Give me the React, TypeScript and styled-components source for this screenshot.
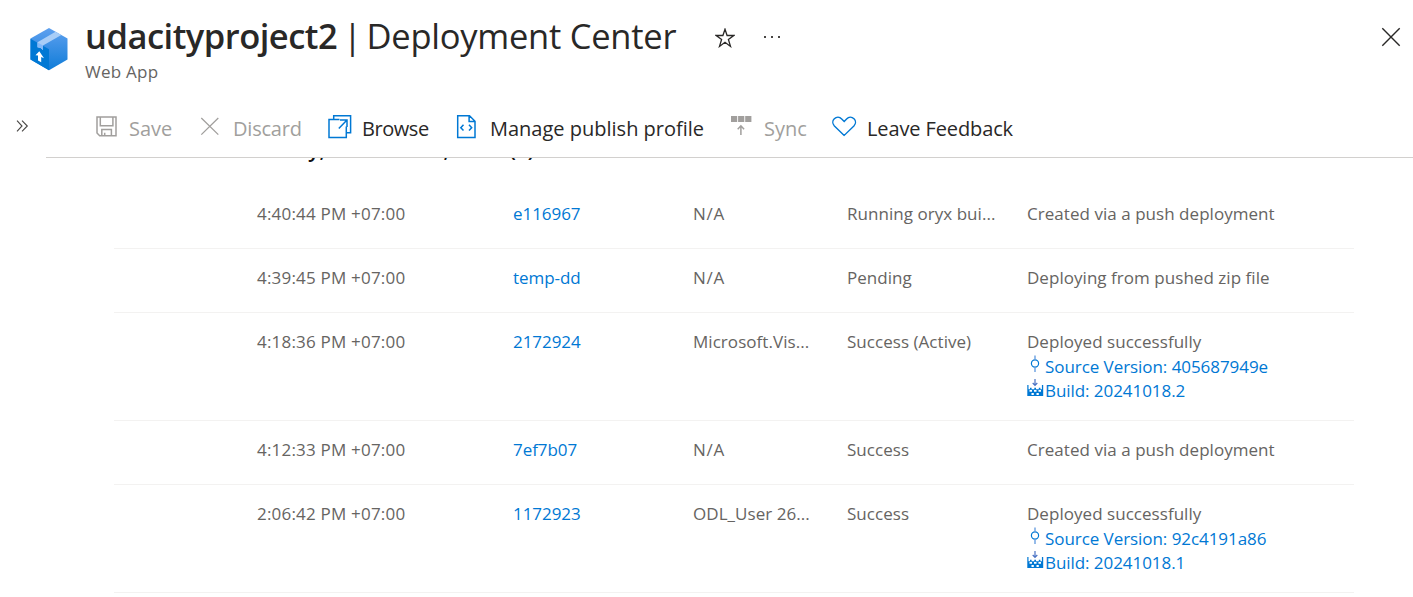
import React from "react";
import styled, { createGlobalStyle } from "styled-components";

const GlobalStyle = createGlobalStyle`
  body {
    margin: 0;
    background: #fff;
    font-family: "Open Sans", "Noto Sans", sans-serif;
    overflow: hidden;
  }
`;

const Page = styled.div`
  display: flex;
  flex-direction: column;
  height: 597px;
  width: 1413px;
  overflow: hidden;
  background: #fff;
`;

const Header = styled.header`
  display: flex;
  height: 98px;
`;

const LogoSlot = styled.div`
  width: 55px;
  padding: 28px 0 0 30px;
  box-sizing: content-box;
  svg { display: block; }
`;

const Heading = styled.div`
  flex: 1;
  padding-top: 12px;
`;

const TitleRow = styled.div`
  display: flex;
  align-items: center;
  height: 48px;
`;

const Title = styled.h1`
  display: flex;
  margin: 0;
  font-size: 34.5px;
  line-height: 48px;
  font-weight: 400;
  color: #292827;
  white-space: pre;
`;

const TitlePart = styled.span<{ $bold?: boolean; $width: number; $track: number }>`
  width: ${(p) => p.$width}px;
  font-weight: ${(p) => (p.$bold ? 600 : 400)};
  letter-spacing: ${(p) => p.$track}px;
`;

const TitleActions = styled.div`
  display: flex;
  align-items: center;
  gap: 28px;
  padding-top: 3px;
  svg { display: block; }
`;

const Subtitle = styled.div`
  font-size: 17px;
  line-height: 24px;
  letter-spacing: 0.25px;
  color: #666462;
`;

const CloseSlot = styled.div`
  padding: 27px 12px 0 0;
  svg { display: block; }
`;

const Toolbar = styled.div`
  display: flex;
  height: 60px;
`;

const Expander = styled.div`
  width: 46px;
  padding: 22px 0 0 16px;
  box-sizing: border-box;
  svg { display: block; }
`;

const Commands = styled.div`
  flex: 1;
  display: flex;
  padding-left: 50px;
  border-bottom: 1px solid #d2d0ce;
`;

const Command = styled.div<{ $width: number; $icon: number; $disabled?: boolean; $track?: number }>`
  display: grid;
  grid-template-columns: ${(p) => p.$icon}px 1fr;
  width: ${(p) => p.$width}px;
  padding-top: 15px;
  box-sizing: border-box;
  font-size: 20px;
  line-height: 32px;
  letter-spacing: ${(p) => p.$track ?? 0}px;
  white-space: nowrap;
  color: ${(p) => (p.$disabled ? "#a19f9d" : "#292827")};
  svg { display: block; margin-top: 1px; }
`;

const Content = styled.main`
  flex: 1;
  overflow: hidden;
  padding: 0 59px 0 114px;
`;

const GroupHeader = styled.div`
  height: 27px;
  padding-left: 143px;
  overflow: hidden;
`;

const GroupLabel = styled.div`
  margin-top: -24px;
  font-size: 21px;
  line-height: 30px;
  font-weight: 600;
  word-spacing: 0.5px;
  color: #111;
  white-space: nowrap;
`;

const Row = styled.div<{ $tall?: boolean }>`
  display: grid;
  grid-template-columns: 256px 180px 154px 180px 1fr;
  height: ${(p) => (p.$tall ? 108 : 64)}px;
  padding: 17px 0 0 143px;
  box-sizing: border-box;
  border-bottom: 1px solid #f3f2f1;
  font-size: 17px;
  line-height: 24.5px;
  color: #666462;
  white-space: nowrap;
`;

const Cell = styled.div<{ $track?: number }>`
  letter-spacing: ${(p) => p.$track ?? 0.04}px;
`;

const Link = styled.a<{ $track?: number }>`
  display: block;
  color: #0078d4;
  letter-spacing: ${(p) => p.$track ?? -0.06}px;
`;

const DetailLink = styled(Link)`
  display: grid;
  grid-template-columns: 18px 1fr;
  svg { display: block; }
`;

const AppLogo = () => (
  <svg width="38" height="43" viewBox="0 0 38 43">
    <defs>
      <linearGradient id="body" x1="0" y1="0" x2="0" y2="1">
        <stop offset="0" stopColor="#5ea0ef" />
        <stop offset="1" stopColor="#0f7cd8" />
      </linearGradient>
    </defs>
    <path d="M19 0 37.5 10.5V31.5L19 42.3 .5 31.5V10.5Z" fill="url(#body)" />
    <path d="M.5 10.8 19 21.3V42.3L.5 31.5Z" fill="#0078d4" />
    <path d="M25.5 3.8 31.3 7 13 17.5V22L10.6 20 7.5 19.2V14.2Z" fill="#a8cdf7" />
    <path d="M7.5 14.4 13 17.5V22L10.6 20 7.5 19.2Z" fill="#83b9f9" />
    <path d="M9.3 23.2 14 30.2 11.2 28.9V34.3L8 32.5V27.5L5.5 27.3Z" fill="#fff" />
  </svg>
);

const StarIcon = () => (
  <svg width="20" height="20" viewBox="0 0 20 20" fill="none" stroke="#292827" strokeWidth="1.3">
    <path d="M10 1.2 12.1 7.5H18.8L13.4 11.5 15.5 18.4 10 14.3 4.5 18.4 6.6 11.5 1.2 7.5H7.9Z" />
  </svg>
);

const DotsIcon = () => (
  <svg width="18" height="4" viewBox="0 0 18 4" fill="#484644">
    <path d="M1 0h2v2H1zM8 0h2v2H8zM15 0h2v2h-2z" />
  </svg>
);

const CloseIcon = () => (
  <svg width="20" height="20" viewBox="0 0 20 20" stroke="#292827" strokeWidth="1.4">
    <path d="M1.3 1.3 18.7 18.7M18.7 1.3 1.3 18.7" />
  </svg>
);

const ChevronsIcon = () => (
  <svg width="13" height="12" viewBox="0 0 13 12" fill="none" stroke="#484644" strokeWidth="1.1">
    <path d="M1 .7 6 6 1 11.3M6 .7 11.3 6 6 11.3" />
  </svg>
);

const SaveIcon = () => (
  <svg width="22" height="24" viewBox="0 0 22 24" fill="none" stroke="#a19f9d" strokeWidth="1.5">
    <path d="M1 3h19v18.7H3.7L1 19ZM4.3 3v8.7h12.6V3M5.8 21.7v-6.2h9.6v6.2M8.7 21.7v-3" />
  </svg>
);

const DiscardIcon = () => (
  <svg width="20" height="24" viewBox="0 0 20 24" stroke="#a19f9d" strokeWidth="1.3">
    <path d="M1.3 4 18.3 20.6M18.3 4 1.3 20.6" />
  </svg>
);

const BrowseIcon = () => (
  <svg width="24" height="25" viewBox="0 0 24 25" fill="none" stroke="#0078d4" strokeWidth="1.5">
    <path d="M5.7 5.5V1.8H22.6V18.8H18.5M11.5 5.5H1V23.6H18.3V12.5M10.8 14.5 18.5 6.4M12 5.9H19V13" />
  </svg>
);

const ProfileIcon = () => (
  <svg width="20" height="25" viewBox="0 0 20 25" fill="none" stroke="#0078d4" strokeWidth="1.5">
    <path d="M1.7 1.8H13.5L19 7.2V23.4H1.7ZM13.1 1.8V7.4H19M7.5 10.8 4.8 13.7 7.5 16.6M13 10.8 15.7 13.7 13 16.6" />
  </svg>
);

const SyncIcon = () => (
  <svg width="21" height="24" viewBox="0 0 21 24" fill="#a19f9d">
    <path d="M0 2h6.2v6H0zM7.1 2h6.2v6H7.1zM14.2 2h6.2v6h-6.2z" />
    <path d="M9.9 21V12.2M6.7 15.2 9.9 11.8 13.1 15.2" fill="none" stroke="#a19f9d" strokeWidth="1.5" />
  </svg>
);

const HeartIcon = () => (
  <svg width="25" height="24" viewBox="0 0 25 24" fill="none" stroke="#0078d4" strokeWidth="1.4">
    <path d="M12.2 21.4 2.4 12C.3 9.8 .3 6.8 2.3 4.8 4.4 2.8 7.6 2.8 9.7 4.9L12.2 7.4 14.6 4.9C16.7 2.8 19.9 2.8 22 4.8 24 6.8 24 9.8 21.9 12Z" />
  </svg>
);

const CommitIcon = () => (
  <svg width="18" height="20" viewBox="0 0 18 20" fill="none" stroke="#0078d4" strokeWidth="1.2">
    <circle cx="8" cy="8.5" r="3.6" />
    <path d="M8 .5V4.9M8 12.1V17" stroke="#6a9fe0" strokeWidth="1.4" />
  </svg>
);

const BuildIcon = () => (
  <svg width="18" height="20" viewBox="0 0 18 20">
    <path fill="#0078d4" d="M.3 6H1.5V10.3H14.9V6H16.2V17H.3Z" />
    <path fill="#0078d4" d="M3 8.7H4.6V10.5H3ZM7.3 8.7H9V10.5H7.3ZM11.8 8.7H13.4V10.5H11.8Z" />
    <path fill="#fff" d="M2.5 11H5V12.8H2.5ZM7 11H9.5V12.8H7ZM11.5 11H14V12.8H11.5ZM4.5 14H6.8V16H4.5ZM9.5 14H11.8V16H9.5Z" />
    <path d="M8 0V6.3M5.7 4 8 6.4 10.3 4" fill="none" stroke="#4a72c4" strokeWidth="1.2" />
  </svg>
);

interface Deployment {
  time: string;
  commit: string;
  author: string;
  status: string;
  message: string;
  source?: string;
  build?: string;
}

const deployments: Deployment[] = [
  { time: "4:40:44 PM +07:00", commit: "e116967", author: "N/A", status: "Running oryx bui...", message: "Created via a push deployment" },
  { time: "4:39:45 PM +07:00", commit: "temp-dd", author: "N/A", status: "Pending", message: "Deploying from pushed zip file" },
  { time: "4:18:36 PM +07:00", commit: "2172924", author: "Microsoft.Vis...", status: "Success (Active)", message: "Deployed successfully", source: "405687949e", build: "20241018.2" },
  { time: "4:12:33 PM +07:00", commit: "7ef7b07", author: "N/A", status: "Success", message: "Created via a push deployment" },
  { time: "2:06:42 PM +07:00", commit: "1172923", author: "ODL_User 26...", status: "Success", message: "Deployed successfully", source: "92c4191a86", build: "20241018.1" },
];

export default function App() {
  return (
    <Page>
      <GlobalStyle />
      <Header>
        <LogoSlot><AppLogo /></LogoSlot>
        <Heading>
          <TitleRow>
            <Title>
              <TitlePart $bold $width={258} $track={-0.5}>udacityproject2</TitlePart>
              <TitlePart $width={23.5} $track={0}>|</TitlePart>
              <TitlePart $width={348} $track={-0.25}>Deployment Center</TitlePart>
            </Title>
            <TitleActions>
              <StarIcon />
              <DotsIcon />
            </TitleActions>
          </TitleRow>
          <Subtitle>Web App</Subtitle>
        </Heading>
        <CloseSlot><CloseIcon /></CloseSlot>
      </Header>
      <Toolbar>
        <Expander><ChevronsIcon /></Expander>
        <Commands>
          <Command $width={104} $icon={33} $disabled><SaveIcon />Save</Command>
          <Command $width={128} $icon={33} $disabled $track={-0.2}><DiscardIcon />Discard</Command>
          <Command $width={128} $icon={34} $track={-0.45}><BrowseIcon />Browse</Command>
          <Command $width={275} $icon={34}><ProfileIcon />Manage publish profile</Command>
          <Command $width={101} $icon={33} $disabled><SyncIcon />Sync</Command>
          <Command $width={190} $icon={35} $track={-0.12}><HeartIcon />Leave Feedback</Command>
        </Commands>
      </Toolbar>
      <Content>
        <GroupHeader>
          <GroupLabel>Friday, October 18, 2024 (5)</GroupLabel>
        </GroupHeader>
        {deployments.map((d) => (
          <Row key={d.time} $tall={!!d.source}>
            <Cell $track={0.2}>{d.time}</Cell>
            <Link>{d.commit}</Link>
            <Cell $track={d.author === "N/A" ? 0.7 : 0.05}>{d.author}</Cell>
            <Cell>{d.status}</Cell>
            <Cell>
              {d.message}
              {d.source && <DetailLink><CommitIcon />Source Version: {d.source}</DetailLink>}
              {d.build && <DetailLink><BuildIcon />Build: {d.build}</DetailLink>}
            </Cell>
          </Row>
        ))}
      </Content>
    </Page>
  );
}
